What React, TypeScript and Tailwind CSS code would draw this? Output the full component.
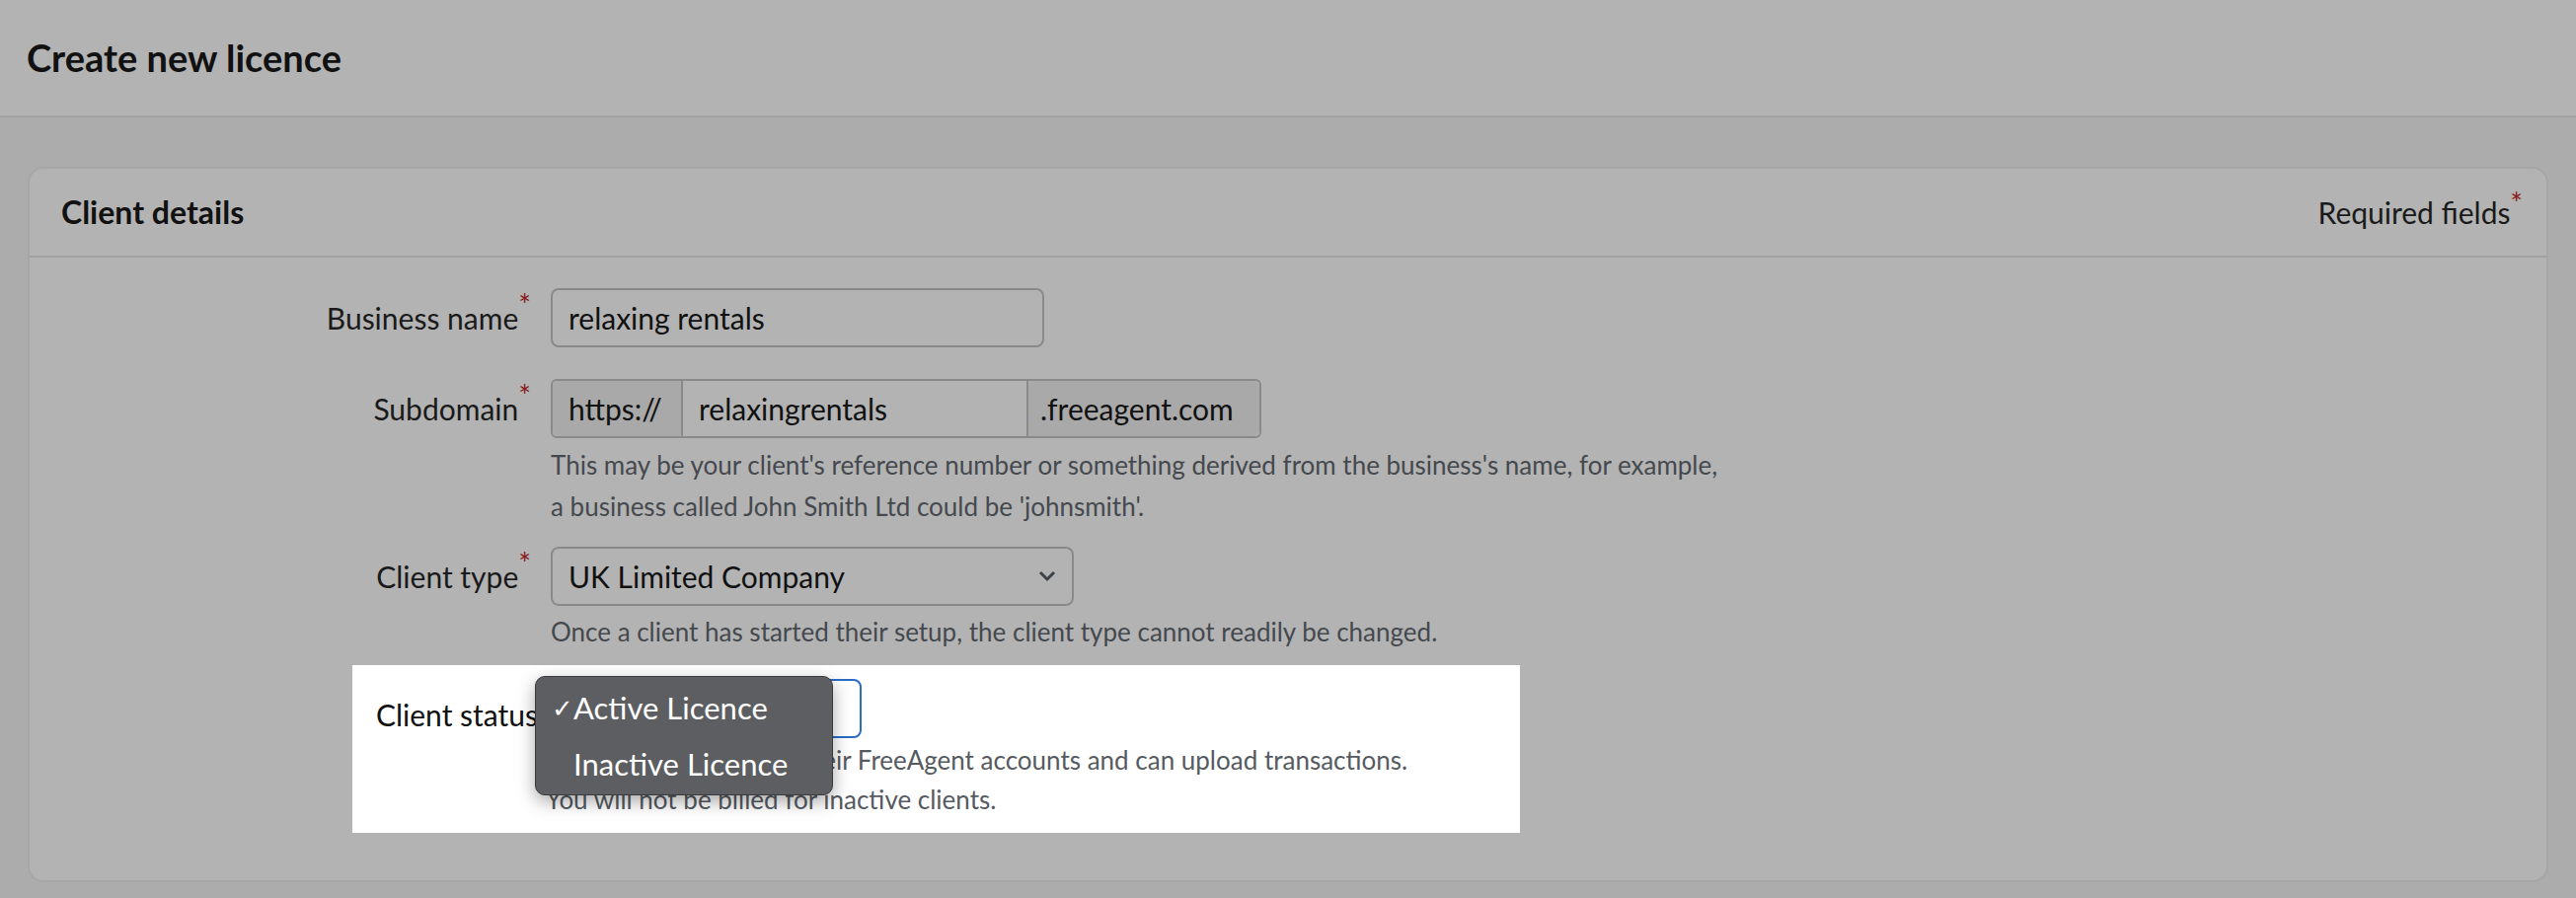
import React from 'react';

const font = { fontFamily: 'Lato, "Noto Sans", sans-serif' };

const Label: React.FC<{ text: string; required?: boolean }> = ({ text, required = true }) => (
    <div className="w-[528px] flex justify-end items-center pr-[20px] h-[60px] text-[30px] text-[#1a1a1a]">
        <span>{text}</span>
        {required && <span className="text-[#8b1a1a] text-[30px] leading-none relative -top-[14px]">*</span>}
    </div>
);

export default function App() {
    return (
        <div style={font} className="w-[2610px] h-[910px] bg-[#acacac] overflow-hidden">
            {/* Page header */}
            <div className="h-[119px] bg-[#b3b3b3] border-b-2 border-[#a0a0a0] flex items-center px-[27px]">
                <h1 className="text-[38px] font-bold text-[#111]">Create new licence</h1>
            </div>

            <div className="px-[28px] pt-[50px]">
                <div className="bg-[#b3b3b3] rounded-[16px] border-2 border-[#a6a6a6] h-[725px]">
                    {/* Card header */}
                    <div className="h-[90px] border-b-2 border-[#a0a0a0] flex items-center justify-between pl-[32px] pr-[24px]">
                        <h2 className="text-[32px] font-bold text-[#111]">Client details</h2>
                        <div className="text-[30px] text-[#1a1a1a]">
                            Required fields<span className="text-[#8b1a1a] relative -top-[10px]">*</span>
                        </div>
                    </div>

                    <div className="pt-[31px] flex flex-col">
                        {/* Business name */}
                        <div className="flex items-center">
                            <Label text="Business name" />
                            <div className="w-[500px] h-[60px] border-2 border-[#8a8a8a] rounded-[8px] flex items-center px-[16px] text-[30px] text-[#111]">
                                relaxing rentals
                            </div>
                        </div>

                        {/* Subdomain */}
                        <div className="flex items-start mt-[32px]">
                            <Label text="Subdomain" />
                            <div className="flex flex-col">
                                <div className="flex h-[60px] border-2 border-[#8a8a8a] rounded-[6px] w-[720px] text-[30px] text-[#111]">
                                    <div className="w-[132px] bg-[#a9a9a9] flex items-center px-[16px] border-r-2 border-[#8a8a8a] rounded-l-[6px]">https://</div>
                                    <div className="w-[348px] flex items-center px-[16px]">relaxingrentals</div>
                                    <div className="flex-1 bg-[#a9a9a9] flex items-center px-[12px] border-l-2 border-[#8a8a8a] rounded-r-[6px]">.freeagent.com</div>
                                </div>
                                <p className="mt-[6px] text-[26px] leading-[42px] text-[#45494e] whitespace-nowrap">
                                    This may be your client's reference number or something derived from the business's name, for example,<br />
                                    a business called John Smith Ltd could be 'johnsmith'.
                                </p>
                            </div>
                        </div>

                        {/* Client type */}
                        <div className="flex items-start mt-[20px]">
                            <Label text="Client type" />
                            <div className="flex flex-col">
                                <div className="w-[530px] h-[60px] border-2 border-[#8a8a8a] rounded-[8px] flex items-center justify-between px-[16px] text-[30px] text-[#111]">
                                    <span>UK Limited Company</span>
                                    <svg width="18" height="12" viewBox="0 0 18 12" fill="none" stroke="#3e4246" strokeWidth="3"><path d="M2 2l7 7 7-7" /></svg>
                                </div>
                                <p className="mt-[6px] text-[26px] leading-[40px] text-[#45494e]">
                                    Once a client has started their setup, the client type cannot readily be changed.
                                </p>
                            </div>
                        </div>

                        {/* Client status (highlighted) */}
                        <div className="ml-[327px] mt-[14px] w-[1183px] h-[170px] bg-white flex items-start relative">
                            <div className="w-[196px] flex justify-end pr-[8px] pt-[28px] text-[30px] text-[#111]">Client status</div>
                            <div className="flex flex-col pt-[14px]">
                                <div className="w-[320px] h-[60px] border-2 border-[#2d6cc6] rounded-[8px]" />
                                <p className="mt-[2px] text-[26px] leading-[40px] text-[#565b62]">
                                    Clients have access to their FreeAgent accounts and can upload transactions.<br />
                                    You will not be billed for inactive clients.
                                </p>
                            </div>
                            <div className="absolute left-[185px] top-[11px] w-[302px] h-[121px] bg-[#5c5e61] rounded-[10px] border border-[#3a3b3d] shadow-[0_6px_18px_rgba(0,0,0,0.35)] text-white text-[31px] flex flex-col justify-center gap-[10px] py-[6px]">
                                <div className="flex items-center pl-[16px]"><span className="w-[22px] text-[26px]">✓</span>Active Licence</div>
                                <div className="flex items-center pl-[38px]">Inactive Licence</div>
                            </div>
                        </div>
                    </div>
                </div>
            </div>
        </div>
    );
}
